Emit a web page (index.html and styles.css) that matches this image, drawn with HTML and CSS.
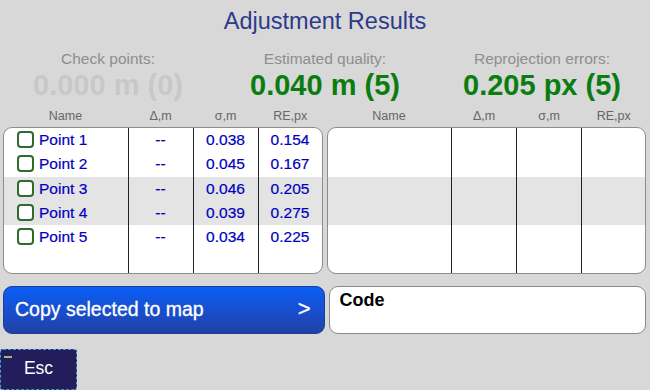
FILE: index.html
```html
<!DOCTYPE html>
<html>
<head>
<meta charset="utf-8">
<link rel="stylesheet" href="styles.css">
</head>
<body>
<div class="screen">
  <h1 class="title">Adjustment Results</h1>
  <div class="stats">
    <div class="stat">
      <div class="stat-label">Check points:</div>
      <div class="stat-value muted">0.000 m (0)</div>
    </div>
    <div class="stat">
      <div class="stat-label">Estimated quality:</div>
      <div class="stat-value">0.040 m (5)</div>
    </div>
    <div class="stat">
      <div class="stat-label">Reprojection errors:</div>
      <div class="stat-value">0.205 px (5)</div>
    </div>
  </div>
  <div class="panes">
    <div class="pane">
      <div class="heads"><span>Name</span><span>Δ,m</span><span>σ,m</span><span>RE,px</span></div>
      <div class="box">
        <table class="grid">
          <tr><td class="name"><span class="check"></span>Point 1</td><td>--</td><td>0.038</td><td>0.154</td></tr>
          <tr><td class="name"><span class="check"></span>Point 2</td><td>--</td><td>0.045</td><td>0.167</td></tr>
          <tr class="shade"><td class="name"><span class="check"></span>Point 3</td><td>--</td><td>0.046</td><td>0.205</td></tr>
          <tr class="shade"><td class="name"><span class="check"></span>Point 4</td><td>--</td><td>0.039</td><td>0.275</td></tr>
          <tr><td class="name"><span class="check"></span>Point 5</td><td>--</td><td>0.034</td><td>0.225</td></tr>
          <tr class="filler"><td></td><td></td><td></td><td></td></tr>
        </table>
      </div>
    </div>
    <div class="pane">
      <div class="heads"><span>Name</span><span>Δ,m</span><span>σ,m</span><span>RE,px</span></div>
      <div class="box">
        <table class="grid">
          <tr><td></td><td></td><td></td><td></td></tr>
          <tr><td></td><td></td><td></td><td></td></tr>
          <tr class="shade"><td></td><td></td><td></td><td></td></tr>
          <tr class="shade"><td></td><td></td><td></td><td></td></tr>
          <tr><td></td><td></td><td></td><td></td></tr>
          <tr class="filler"><td></td><td></td><td></td><td></td></tr>
        </table>
      </div>
    </div>
  </div>
  <div class="actions">
    <button class="copy"><span>Copy selected to map</span><span class="chev">&gt;</span></button>
    <div class="code">Code</div>
  </div>
  <button class="esc">Esc</button>
</div>
</body>
</html>
```

FILE: styles.css
```css
* { box-sizing: border-box; }
html, body { margin: 0; padding: 0; }
body {
  width: 650px;
  height: 390px;
  overflow: hidden;
  background: #d8d8d8;
  font-family: "Liberation Sans", Arial, sans-serif;
}
.screen {
  display: flex;
  flex-direction: column;
  height: 390px;
}
.title {
  margin: 0 0 8px 0;
  height: 42px;
  line-height: 42px;
  text-align: center;
  font-size: 23.5px;
  font-weight: normal;
  color: #2d3a8c;
}
.stats {
  display: grid;
  grid-template-columns: 216px 218px 216px;
  text-align: center;
  padding-bottom: 3px;
}
.stat-label {
  font-size: 15.5px;
  line-height: 18px;
  color: #8e8e8e;
}
.stat-value {
  font-size: 29px;
  font-weight: bold;
  line-height: 34px;
  color: #0b7d10;
}
.stat-value.muted { color: #c8c8c8; }
.panes {
  display: flex;
  gap: 4px;
  padding: 2px 4px 0 3px;
}
.pane { flex: 1 1 0; min-width: 0; }
.heads {
  display: grid;
  grid-template-columns: 125px 65px 65px 1fr;
  font-size: 12.5px;
  line-height: 18px;
  color: #666;
  text-align: center;
  padding-bottom: 2px;
}
.box {
  height: 147px;
  background: #fff;
  border: 1px solid #8c8c8c;
  border-radius: 9px;
  overflow: hidden;
}
.grid {
  width: 100%;
  height: 100%;
  border-collapse: collapse;
  table-layout: fixed;
}
.grid td {
  height: 24.3px;
  padding: 0;
  text-align: center;
  font-size: 15.5px;
  color: #0000c0;
  border-left: 1px solid #222;
  white-space: nowrap;
  -webkit-text-stroke: 0.2px #0000c0;
}
.grid td:first-child { width: 124px; border-left: none; }
.grid td:nth-child(2), .grid td:nth-child(3) { width: 65px; }
.grid tr.filler td { height: auto; }
.grid tr.shade td { background: #e4e4e4; }
.grid td.name {
  text-align: left;
  padding-left: 13px;
  font-size: 15.5px;
}
.check {
  display: inline-block;
  width: 17px;
  height: 17px;
  border: 2px solid #2e6b2e;
  border-radius: 4px;
  background: #fff;
  vertical-align: -3px;
  margin-right: 5px;
  -webkit-text-stroke: 0;
}
.actions {
  display: flex;
  gap: 4px;
  padding: 12px 4px 0 3px;
}
.copy {
  flex: 1 1 0;
  min-width: 0;
  height: 48px;
  display: flex;
  align-items: center;
  justify-content: space-between;
  padding: 0 13px 2px 11px;
  border: 1px solid #1a3e98;
  border-radius: 9px;
  background: linear-gradient(#0a5ef5, #1a4cc8 60%, #1f42a2);
  color: #fff;
  font-family: "Liberation Sans", Arial, sans-serif;
  font-size: 19.5px;
  text-align: left;
  -webkit-text-stroke: 0.3px #fff;
}
.chev { font-size: 22px; }
.code {
  flex: 1 1 0;
  min-width: 0;
  height: 48px;
  background: #fff;
  border: 1px solid #8a8a8a;
  border-radius: 9px;
  padding: 3px 10px;
  font-size: 18px;
  font-weight: bold;
  color: #000;
}
.esc {
  position: relative;
  margin-top: 15px;
  width: 77px;
  height: 42px;
  background: #231d5c;
  border: 1px dashed #3f9ad8;
  border-radius: 3px;
  color: #fff;
  font-family: "Liberation Sans", Arial, sans-serif;
  font-size: 17.5px;
  padding: 0 0 2px 0;
}
.esc::before {
  content: "";
  position: absolute;
  left: 3px;
  top: 6px;
  width: 8px;
  height: 2px;
  background: #a6b884;
}
```
